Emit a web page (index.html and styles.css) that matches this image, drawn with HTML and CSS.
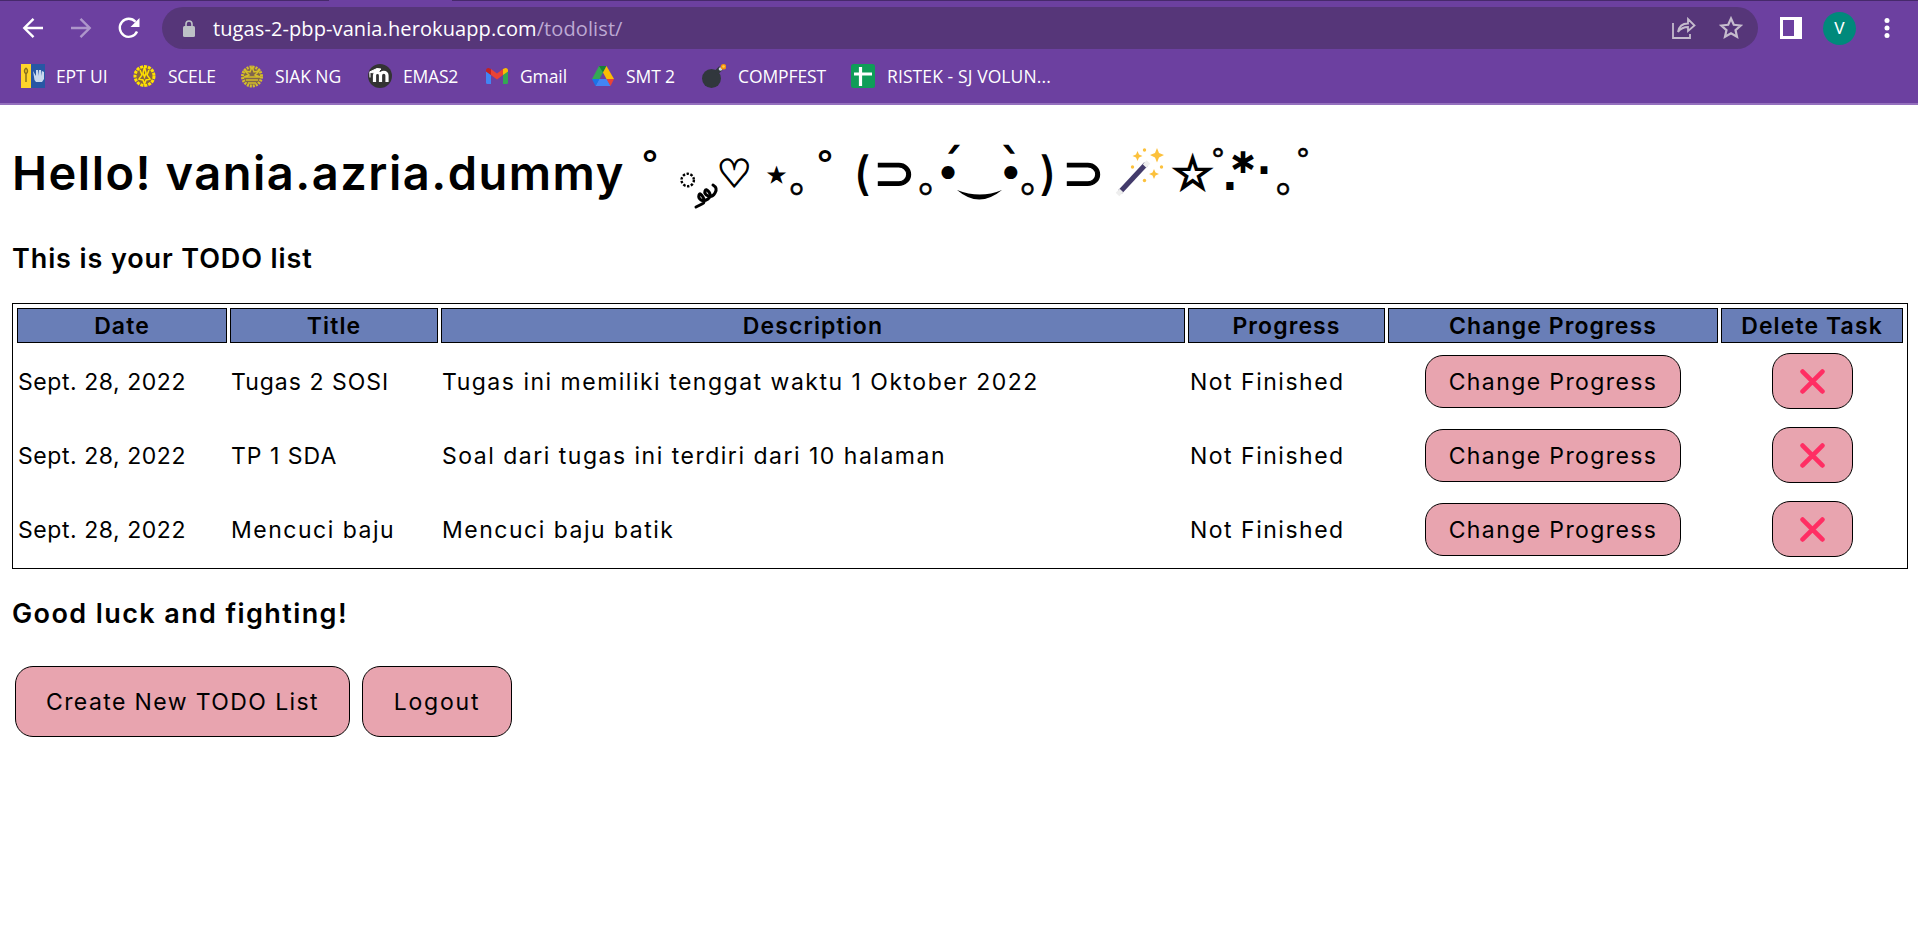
FILE: index.html
```
<!DOCTYPE html>
<html lang="en">
<head>
<meta charset="utf-8">
<title>Todo List</title>
<link rel="stylesheet" href="styles.css">
</head>
<body>
<header class="chrome">
  <div class="tabstrip"><span class="active-tab"></span></div>
  <div class="toolbar">
    <svg class="nav" viewBox="0 0 24 24"><path d="M22 12H4M12.500 2.800L3.300 12l9.200 9.200"/></svg>
    <svg class="nav dim" viewBox="0 0 24 24"><path d="M2 12h18M11.500 2.800L20.700 12l-9.200 9.200"/></svg>
    <svg class="nav" viewBox="0 0 24 24"><path d="M20 15.500A9 9 0 1 1 18.500 5.800"/><path class="solid" d="M22.500 2v9h-9z"/></svg>
    <div class="omnibox">
      <svg class="lock" viewBox="0 0 12 17"><path d="M3 7V4a3 3 0 0 1 6 0v3" fill="none" stroke="#bdc1c6" stroke-width="1.600"/><rect y="6" width="12" height="11" rx="1.500" fill="#bdc1c6"/></svg>
      <span class="url">tugas-2-pbp-vania.herokuapp.com<span class="path">/todolist/</span></span>
      <svg class="share" viewBox="0 0 24 22"><path d="M1 6v15h17v-4M6 15C7 9 11 6.500 16 6.500V2l6.500 6.500L16 14v-4c-4 0-7 1-10 5z"/></svg>
      <svg class="fav" viewBox="0 0 24 24"><path d="M12 2.500l2.800 6.300 6.900.7-5.200 4.600 1.500 6.700-6-3.500-6 3.500 1.500-6.700L2.300 9.500l6.900-.7z"/></svg>
    </div>
    <svg class="panel" viewBox="0 0 22 22"><path fill="#fff" fill-rule="evenodd" d="M0 0h22v22H0zM3 3v16h11V3z"/></svg>
    <span class="avatar">V</span>
    <svg class="dots" viewBox="0 0 6 22"><circle cx="3" cy="3.500" r="2.500"/><circle cx="3" cy="11" r="2.500"/><circle cx="3" cy="18.500" r="2.500"/></svg>
  </div>
  <nav class="bookmarks">
    <a class="bm ept"><svg viewBox="0 0 24 24"><path fill="#ffd42a" d="M0 0h10v24H0z"/><path fill="#2857a4" d="M10 0h14v24H10z"/><path d="M5 4q3 3 0 6q-3-3 0-6m0 6v8" stroke="#8a6f1c" stroke-width="1.500" fill="none"/><path d="M12 7l1.500 9 1.500 2h6l2-3V8l-2-1v5l-1-6h-2v6l-1-6h-2v6z" fill="#c8d8ee"/></svg>EPT UI</a>
    <a class="bm scele"><svg viewBox="0 0 24 24"><circle cx="11.500" cy="12" r="9.500" fill="#8a6540" stroke="#ffe100" stroke-width="3" stroke-dasharray="3 1"/><path d="M7 6l2 5-3 4 4 1 1.500 4 1.500-4 4-1-3-4 2-5M11.500 3l-1.500 6 1.500 4 1.500-4z" stroke="#ffe100" stroke-width="1.500" fill="none"/></svg>SCELE</a>
    <a class="bm siak"><svg viewBox="0 0 24 24"><circle cx="12" cy="12.500" r="9.500" fill="#80654c" stroke="#d4bd2a" stroke-width="3" stroke-dasharray="2 1"/><path d="M12 3l-2 5-5-1 4 4-5 2h16l-5-2 4-4-5 1zM6 16h12M8 19h8" stroke="#d4bd2a" stroke-width="1.500" fill="none"/></svg>SIAK NG</a>
    <a class="bm emas"><svg viewBox="0 0 24 24"><circle cx="12" cy="12" r="12" fill="#333"/><path d="M6.500 18v-6.500a2.800 2.800 0 0 1 6 0V18m0-6.500a2.800 2.800 0 0 1 6.500 0V18" stroke="#fff" stroke-width="3.200" fill="none"/><path d="M1.500 8L9 4.500 13 5 9 9l-7-.5v5" stroke="#fff" stroke-width="1" fill="#fff"/></svg>EMAS2</a>
    <a class="bm gmail"><svg viewBox="0 0 24 24"><path fill="#4285f4" d="M1 7l5 4v9H2.500Q1 20 1 18.500z"/><path fill="#34a853" d="M23 7l-5 4v9h3.500q1.500 0 1.500-1.500z"/><path fill="#ea4335" d="M6 5l6 4.500L18 5v6l-6 4.500L6 11z"/><path fill="#c5221f" d="M1 6.500Q1 4 3.500 4L6 5v6L1 7.500z"/><path fill="#fbbc04" d="M23 6.500Q23 4 20.500 4L18 5v6l5-3.500z"/></svg>Gmail</a>
    <a class="bm smt"><svg viewBox="0 0 24 24"><path fill="#34a853" d="M8 2h7.500L12 8.500 8.500 15H1z"/><path fill="#188038" d="M8 2h7.500L12 8.500z"/><path fill="#fbbc04" d="M15.500 2L23 15h-7.500L12 8.500z"/><path fill="#4285f4" d="M8 15h8l3.500 7h-15z"/><path fill="#1a73e8" d="M1 15h7.500l-4 7z"/><path fill="#ea4335" d="M15.500 15H23l-3.500 7z"/></svg>SMT 2</a>
    <a class="bm comp"><svg viewBox="0 0 24 24"><circle cx="9.500" cy="14.500" r="9.500" fill="#31373d"/><path d="M14 9l5-5" stroke="#31373d" stroke-width="5"/><circle cx="18.500" cy="5" r="1.800" fill="#ccd6dd"/><circle cx="21.500" cy="2.800" r="2.800" fill="#f4900c"/><circle cx="21.500" cy="2.500" r="1.300" fill="#ffcc4d"/></svg>COMPFEST</a>
    <a class="bm ristek"><svg viewBox="0 0 24 24"><rect width="24" height="24" rx="2.500" fill="#0f9d58"/><path d="M9.500 3v19M3 10h18" stroke="#fff" stroke-width="3.200"/></svg>RISTEK - SJ VOLUN...</a>
  </nav>
</header>
<main class="page">
  <h1 class="greeting"><span class="name">Hello! vania.azria.dummy</span>
    <svg class="kaomoji" viewBox="640 130 680 90">
      <g class="sym">
        <text class="deg" x="650" y="178">°</text>
        <circle cx="687.700" cy="180" r="6.200" fill="none" stroke="#000" stroke-width="2.400" stroke-dasharray="2.400 1.500"/>
        <path d="M713 185q5 3 2 8t-7 3-3-5 4 1-1 7-7 1-2-5 4 2-1 7-6 3" fill="none" stroke="#000" stroke-width="3" stroke-linecap="round"/>
        <text class="bold" x="734" y="187" font-size="39">♡</text>
        <text class="bold" x="776.500" y="188" font-size="40">⋆</text>
        <text class="low" x="799" y="192">｡</text>
        <text class="deg" x="825" y="178">°</text>
        <text class="paren" x="862" y="190">(</text>
        <text class="bold" x="894.500" y="188.500" font-size="47" textLength="42" lengthAdjust="spacingAndGlyphs">⊃</text>
        <text class="low" x="928" y="192">｡</text>
        <text class="bold" x="952" y="178" font-size="40">´</text>
        <text x="948" y="188.500" font-size="45">•</text>
        <path d="M957 190q22 19 45 0q-22 9-45 0z"/>
        <text class="bold" x="1011" y="178" font-size="40">`</text>
        <text x="1010.700" y="188.500" font-size="45">•</text>
        <text class="low" x="1030" y="192">｡</text>
        <text class="paren" x="1048" y="190">)</text>
        <text class="bold" x="1083.500" y="188.500" font-size="47" textLength="42" lengthAdjust="spacingAndGlyphs">⊃</text>
        <path d="M1120 192l26-28" stroke="#433b6b" stroke-width="5"/>
        <path d="M1117.500 194.500l4-4M1144.500 166l4-4" stroke="#eee" stroke-width="5"/>
        <g fill="#fcc13c"><path d="M1157 148l2 5 5 2-5 2.500-2 5-2-5-5-2.500 5-2z"/><path d="M1137.500 151l1.500 3.500 3.500 1.500-3.500 1.500-1.500 3.500-1.500-3.500-3.500-1.500 3.500-1.500z"/><path d="M1154 169l1.500 3.500 3.500 1.500-3.500 1.500-1.500 3.500-1.500-3.500-3.500-1.500 3.500-1.500z"/><circle cx="1144.500" cy="150" r="1.700"/><circle cx="1132.500" cy="167" r="1.700"/><circle cx="1161.500" cy="167" r="1.700"/><circle cx="1144.500" cy="180.500" r="1.700"/></g>
        <text class="heavy" x="1192.500" y="189" font-size="46">☆</text>
        <text class="ring" x="1218" y="170">°</text>
        <text class="heavy" x="1230" y="189" font-size="48">.</text>
        <text class="heavy" x="1243" y="184" font-size="42">*</text>
        <text class="heavy" x="1264" y="186" font-size="44">·</text>
        <text class="low" x="1285.500" y="192">｡</text>
        <text class="ring" x="1303" y="170">°</text>
      </g>
    </svg>
  </h1>
  <h3 class="subtitle">This is your TODO list</h3>
  <table class="todo">
    <colgroup><col class="c-date"><col class="c-title"><col class="c-desc"><col class="c-prog"><col class="c-change"><col class="c-del"></colgroup>
    <tr><th>Date</th><th>Title</th><th>Description</th><th>Progress</th><th>Change Progress</th><th>Delete Task</th></tr>
    <tr><td>Sept. 28, 2022</td><td>Tugas 2 SOSI</td><td>Tugas ini memiliki tenggat waktu 1 Oktober 2022</td><td>Not Finished</td><td><button class="change">Change Progress</button></td><td><button class="delete"><svg viewBox="0 0 24 24"><path d="M2.500 2.500l19 19m0-19l-19 19"/></svg></button></td></tr>
    <tr><td>Sept. 28, 2022</td><td>TP 1 SDA</td><td>Soal dari tugas ini terdiri dari 10 halaman</td><td>Not Finished</td><td><button class="change">Change Progress</button></td><td><button class="delete"><svg viewBox="0 0 24 24"><path d="M2.500 2.500l19 19m0-19l-19 19"/></svg></button></td></tr>
    <tr><td>Sept. 28, 2022</td><td class="wide">Mencuci baju</td><td>Mencuci baju batik</td><td>Not Finished</td><td><button class="change">Change Progress</button></td><td><button class="delete"><svg viewBox="0 0 24 24"><path d="M2.500 2.500l19 19m0-19l-19 19"/></svg></button></td></tr>
  </table>
  <h3 class="luck">Good luck and fighting!</h3>
  <div class="actions"><button class="create">Create New TODO List</button><button class="logout">Logout</button></div>
</main>
</body>
</html>
```
FILE: styles.css
```
* { box-sizing: border-box; }
body { margin: 0; background: #fff; color: #000; font-family: Inter, "Liberation Sans", sans-serif; font-size: 23px; }
svg { display: block; flex: none; }

.chrome { height: 105px; background: #6c40a0; border-bottom: 2px solid #9470bd; font-family: "Open Sans", "Noto Sans", sans-serif; color: #fff; }
.tabstrip { height: 1px; background: #46296b; padding-left: 329px; }
.active-tab { display: block; width: 123px; height: 1px; background: #6c40a0; }
.toolbar { display: flex; align-items: center; height: 54px; padding-left: 21px; }
.nav { width: 24px; height: 24px; margin-right: 24px; fill: none; stroke: #fff; stroke-width: 2.4; }
.nav.dim { opacity: .45; }
.nav .solid { fill: #fff; stroke: none; }
.omnibox { display: flex; align-items: center; width: 1596px; height: 42px; margin-left: -3px; padding-left: 21px; border-radius: 21px; background: #563679; }
.lock { width: 12px; height: 17px; }
.url { flex: 1; margin-left: 18px; font-size: 20px; letter-spacing: .1px; }
.path { color: #bda9d3; }
.share, .fav { fill: none; stroke: #c5bccd; stroke-width: 1.8; }
.share { width: 24px; height: 22px; margin-right: 23px; }
.fav { width: 24px; height: 24px; margin-right: 15px; stroke-width: 2.2; }
.panel { width: 22px; height: 22px; margin-left: 22px; }
.avatar { display: flex; align-items: center; justify-content: center; width: 33px; height: 33px; margin-left: 21px; border-radius: 50%; background: #00897b; font: 17px Roboto, sans-serif; }
.dots { width: 6px; height: 22px; margin-left: 28px; fill: #fff; }
.bookmarks { display: flex; height: 41px; padding-left: 21px; font-size: 17.5px; white-space: nowrap; }
.bm { display: flex; align-items: center; gap: 11px; letter-spacing: -.1px; }
.bm svg { width: 24px; height: 24px; }
.ept { width: 112px; }
.scele { width: 107px; letter-spacing: -.3px; }
.siak { width: 128px; }
.emas { width: 117px; letter-spacing: -.2px; }
.gmail { width: 106px; }
.smt { width: 111px; }
.comp { width: 149px; gap: 12px; }
.ristek { gap: 12px; letter-spacing: .1px; }

.page { padding: 35px 10px 0 12px; }
h1, h3 { margin: 0; font-weight: 600; white-space: nowrap; }
.greeting { display: flex; height: 65px; font-size: 47px; line-height: 65px; }
.name { width: 628px; letter-spacing: 1.5px; }
.kaomoji { width: 680px; height: 90px; margin-top: -10px; overflow: visible; }
.sym { font-family: "DejaVu Sans", sans-serif; font-weight: 400; letter-spacing: 0; text-anchor: middle; }
.bold { stroke: #000; stroke-width: 1.3px; }
.heavy { stroke: #000; stroke-width: 2.2px; }
.deg { font-size: 38px; font-weight: 700; }
.ring { font-size: 30px; stroke: #000; stroke-width: .5px; }
.low { font-family: "Noto Sans CJK JP", sans-serif; font-size: 38px; stroke: #000; stroke-width: .5px; }
.paren { font-family: Inter, sans-serif; font-size: 46px; font-weight: 500; }
.subtitle { margin-top: 37px; height: 34px; font-size: 27px; line-height: 34px; letter-spacing: .9px; }
.todo { width: 1896px; height: 266px; margin-top: 27px; table-layout: fixed; border: 1px solid #000; border-spacing: 3px; padding: 1px 1px 0; }
.c-date { width: 210px; }
.c-title { width: 208px; }
.c-desc { width: 744px; }
.c-prog { width: 197px; }
.c-change { width: 330px; }
.c-del { width: 182px; }
th { height: 35px; padding: 0; border: 1px solid #000; background: #697eb7; font-weight: 600; line-height: 30px; letter-spacing: 1.1px; }
td { height: 71px; padding: 0 1px; white-space: nowrap; letter-spacing: 1.5px; }
td:nth-child(1) { letter-spacing: .55px; }
td:nth-child(2) { letter-spacing: 1px; }
td.wide:nth-child(2) { letter-spacing: 1.5px; }
td:nth-child(4) { padding-left: 2px; }
td:nth-child(n+5) { text-align: center; }
button { font: inherit; letter-spacing: 1.4px; color: #000; border: 1px solid #000; background: #e8a4af; border-radius: 18px; padding: 0; white-space: nowrap; }
.change { width: 256px; height: 53px; vertical-align: middle; }
.delete { width: 81px; height: 56px; margin-bottom: 2px; vertical-align: middle; }
.delete svg { width: 25px; height: 25px; margin: 2px auto 0; fill: none; stroke: #ff2e63; stroke-width: 4.5; stroke-linecap: round; }
.luck { margin-top: 28px; height: 34px; font-size: 27px; line-height: 34px; letter-spacing: 1.4px; }
.actions { display: flex; gap: 12px; margin: 35px 0 0 3px; }
.create { width: 335px; height: 71px; }
.logout { width: 150px; height: 71px; letter-spacing: 1.8px; }
```
